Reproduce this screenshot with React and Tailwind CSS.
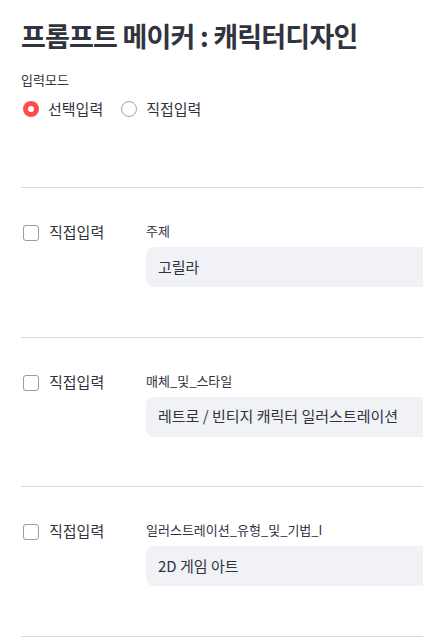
import React from "react";

const font = { fontFamily: '"Noto Sans CJK KR", "Noto Sans", sans-serif' };

function Row({ label, value }) {
  return (
    <div className="flex pt-[34px] pb-[49.5px] border-b border-[#d9d9de]">
      <div className="w-[125px] shrink-0 flex items-start">
        <div className="w-[16px] h-[16px] ml-[2px] mt-[3px] rounded-[3px] border border-[#9a9ba3] bg-white" />
        <span className="ml-[10px] text-[15px] leading-[20px] text-[#31333f]">직접입력</span>
      </div>
      <div className="flex-1 flex flex-col">
        <div className="-mt-[1px] text-[13px] leading-[20px] text-[#31333f] h-[26px]">{label}</div>
        <div className="h-[40px] rounded-[8px] bg-[#f0f2f6] flex items-center px-[12px] text-[15px] text-[#31333f] -mr-[30px]">
          {value}
        </div>
      </div>
    </div>
  );
}

export default function App() {
  return (
    <div className="w-[423px] h-[638px] overflow-hidden bg-white" style={font}>
      <div className="pl-[21px]">
        <h1 className="pt-[17px] text-[27px] leading-[38px] font-bold text-[#31333f] tracking-[-0.8px] whitespace-nowrap">
          프롬프트 메이커 : 캐릭터디자인
        </h1>
        <div className="mt-[15px] text-[13px] leading-[20px] text-[#31333f]">입력모드</div>
        <div className="mt-[8px] flex items-center h-[22px] pb-[67px] box-content border-b border-[#d9d9de]">
          <div className="flex items-center">
            <div className="w-[16px] h-[16px] ml-[2px] rounded-full bg-[#ff4b4b] flex items-center justify-center">
              <div className="w-[6px] h-[6px] rounded-full bg-white" />
            </div>
            <span className="ml-[9px] text-[15px] text-[#31333f]">선택입력</span>
          </div>
          <div className="flex items-center ml-[18px]">
            <div className="w-[16px] h-[16px] rounded-full border border-[#a3a4ab] bg-white" />
            <span className="ml-[9px] text-[15px] text-[#31333f]">직접입력</span>
          </div>
        </div>
        <Row label="주제" value="고릴라" />
        <Row label="매체_및_스타일" value="레트로 / 빈티지 캐릭터 일러스트레이션" />
        <Row label="일러스트레이션_유형_및_기법_I" value="2D 게임 아트" />
      </div>
    </div>
  );
}
